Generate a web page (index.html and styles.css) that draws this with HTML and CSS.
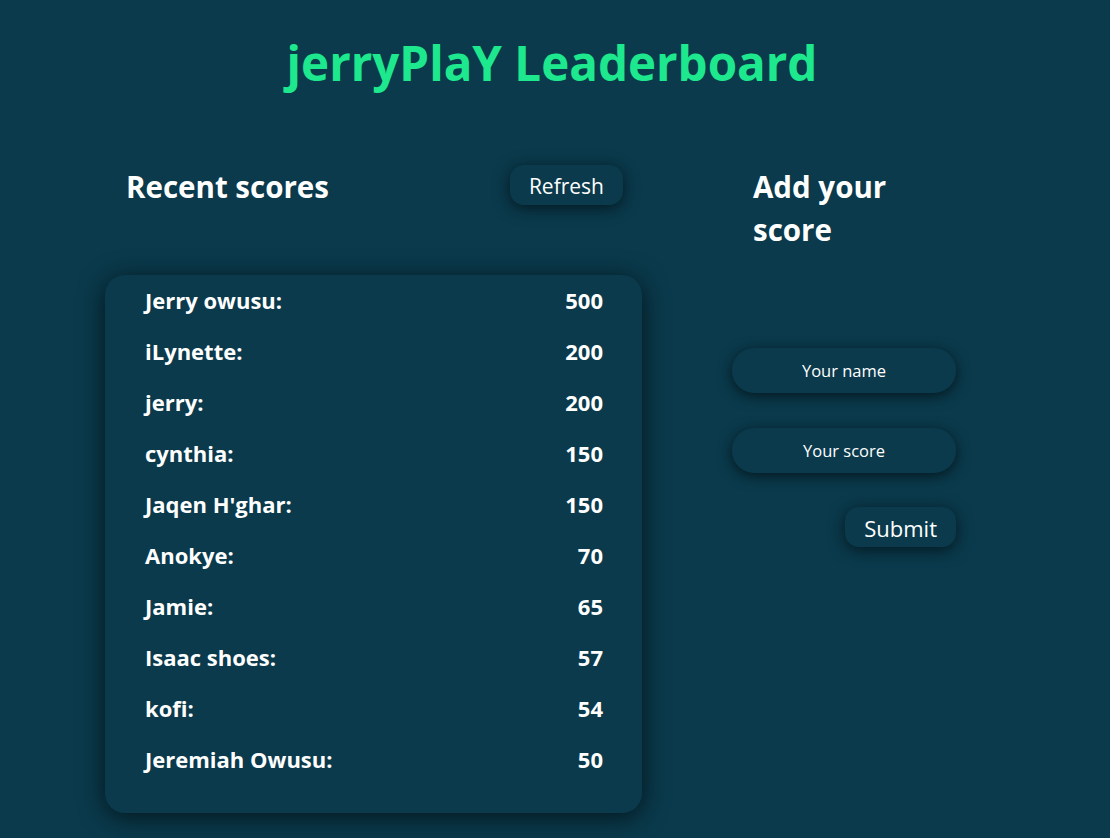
FILE: index.html
```html
<!DOCTYPE html>
<html lang="en">
<head>
<meta charset="utf-8">
<title>jerryPlaY Leaderboard</title>
<link rel="stylesheet" href="styles.css">
</head>
<body>
<h1 class="title">jerryPlaY Leaderboard</h1>
<main class="layout">
  <section class="scores">
    <div class="scores-head">
      <h2 class="heading">Recent scores</h2>
      <button class="btn">Refresh</button>
    </div>
    <ul class="board">
      <li class="row"><span>Jerry owusu:</span><span>500</span></li>
      <li class="row"><span>iLynette:</span><span>200</span></li>
      <li class="row"><span>jerry:</span><span>200</span></li>
      <li class="row"><span>cynthia:</span><span>150</span></li>
      <li class="row"><span>Jaqen H'ghar:</span><span>150</span></li>
      <li class="row"><span>Anokye:</span><span>70</span></li>
      <li class="row"><span>Jamie:</span><span>65</span></li>
      <li class="row"><span>Isaac shoes:</span><span>57</span></li>
      <li class="row"><span>kofi:</span><span>54</span></li>
      <li class="row"><span>Jeremiah Owusu:</span><span>50</span></li>
    </ul>
  </section>
  <section class="add">
    <h2 class="heading add-heading">Add your score</h2>
    <form class="form">
      <input class="field" type="text" placeholder="Your name">
      <input class="field" type="text" placeholder="Your score">
      <button class="btn btn-submit" type="button">Submit</button>
    </form>
  </section>
</main>
</body>
</html>
```
FILE: styles.css
```css
* { box-sizing: border-box; }
body {
  margin: 0;
  min-height: 838px;
  background: #0a3a4c;
  color: #ffffff;
  font-family: "Open Sans", "Noto Sans", sans-serif;
}
.title {
  margin: 0;
  padding: 30px 6px 0 0;
  text-align: center;
  font-size: 47.5px;
  line-height: 65px;
  font-weight: 700;
  color: #1ee88d;
}
.layout {
  display: flex;
  gap: 90px;
  padding: 70px 0 0 105px;
}
.scores { width: 537px; }
.scores-head {
  display: flex;
  justify-content: space-between;
  align-items: flex-start;
  padding: 0 19px 0 21px;
  height: 110px;
}
.heading {
  margin: 0;
  font-size: 29.5px;
  font-weight: 700;
  line-height: 43px;
}
.btn {
  font-family: inherit;
  background: #0a3a4c;
  color: #ffffff;
  border: none;
  border-radius: 14px;
  height: 40px;
  padding: 1px 19px 0;
  font-size: 21px;
  box-shadow: 0 3px 16px rgba(0, 0, 0, 0.6);
}
.board {
  list-style: none;
  margin: 0;
  padding: 12px 39px 26px 40px;
  height: 538px;
  border-radius: 20px;
  background: #0a3a4c;
  box-shadow: 0 4px 26px rgba(0, 0, 0, 0.65);
}
.row {
  display: flex;
  justify-content: space-between;
  height: 51px;
  line-height: 27px;
  font-size: 22px;
  font-weight: 700;
}
.add { width: 224px; }
.add-heading {
  padding-left: 21px;
  width: 190px;
}
.form {
  display: flex;
  flex-direction: column;
  align-items: stretch;
  gap: 35px;
  margin-top: 97px;
}
.field {
  height: 45px;
  border: none;
  border-radius: 22px;
  background: #0a3a4c;
  color: #ffffff;
  text-align: center;
  font-family: inherit;
  font-size: 16.5px;
  box-shadow: 0 3px 14px rgba(0, 0, 0, 0.6);
  outline: none;
}
.field::placeholder { color: #ffffff; opacity: 1; }
.btn-submit {
  align-self: flex-end;
  margin-top: -1px;
  font-size: 22px;
  padding: 1px 19px 0;
}
```
